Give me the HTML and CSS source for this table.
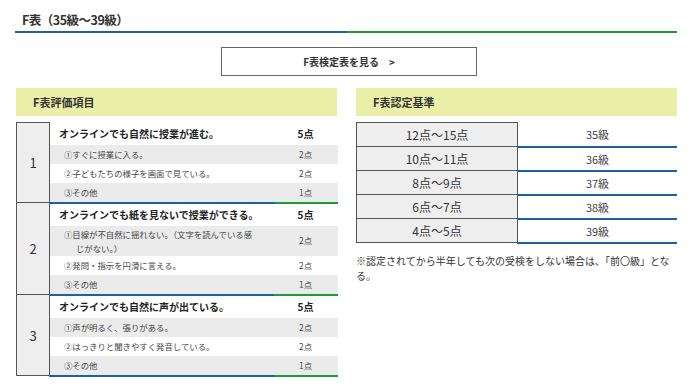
FILE: index.html
```html
<!DOCTYPE html>
<html lang="ja">
<head>
<meta charset="utf-8">
<title>F表</title>
<link rel="stylesheet" href="styles.css">
</head>
<body>
<div class="page">
  <h2 class="page-title">F表（35級〜39級）</h2>
  <div class="rule"><span class="rule-blue"></span><span class="rule-green"></span></div>

  <div class="btn-wrap">
    <a class="btn" href="#">F表検定表を見る　&gt;</a>
  </div>

  <div class="columns">
    <section class="col">
      <h3 class="col-head">F表評価項目</h3>
      <table class="eval">
        <colgroup><col class="c-num"><col class="c-item"><col class="c-pt"></colgroup>
        <tbody>
          <tr>
            <th class="num" rowspan="4">1</th>
            <td class="item head">オンラインでも自然に授業が進む。</td>
            <td class="pt head">5点</td>
          </tr>
          <tr class="gray">
            <td class="item sub">①すぐに授業に入る。</td>
            <td class="pt sub">2点</td>
          </tr>
          <tr>
            <td class="item sub">②子どもたちの様子を画面で見ている。</td>
            <td class="pt sub">2点</td>
          </tr>
          <tr class="gray last">
            <td class="item sub">③その他</td>
            <td class="pt sub">1点</td>
          </tr>
        </tbody>
        <tbody>
          <tr>
            <th class="num" rowspan="4">2</th>
            <td class="item head">オンラインでも紙を見ないで授業ができる。</td>
            <td class="pt head">5点</td>
          </tr>
          <tr class="gray">
            <td class="item sub multi">①目線が不自然に揺れない。（文字を読んでいる感じがない。）</td>
            <td class="pt sub">2点</td>
          </tr>
          <tr>
            <td class="item sub">②発問・指示を円滑に言える。</td>
            <td class="pt sub">2点</td>
          </tr>
          <tr class="gray last">
            <td class="item sub">③その他</td>
            <td class="pt sub">1点</td>
          </tr>
        </tbody>
        <tbody>
          <tr>
            <th class="num" rowspan="4">3</th>
            <td class="item head">オンラインでも自然に声が出ている。</td>
            <td class="pt head">5点</td>
          </tr>
          <tr class="gray">
            <td class="item sub">①声が明るく、張りがある。</td>
            <td class="pt sub">2点</td>
          </tr>
          <tr>
            <td class="item sub">②はっきりと聞きやすく発音している。</td>
            <td class="pt sub">2点</td>
          </tr>
          <tr class="gray last">
            <td class="item sub">③その他</td>
            <td class="pt sub">1点</td>
          </tr>
        </tbody>
      </table>
    </section>

    <section class="col">
      <h3 class="col-head">F表認定基準</h3>
      <table class="grade">
        <tbody>
          <tr><th>12点〜15点</th><td>35級</td></tr>
          <tr><th>10点〜11点</th><td>36級</td></tr>
          <tr><th>8点〜9点</th><td>37級</td></tr>
          <tr><th>6点〜7点</th><td>38級</td></tr>
          <tr><th>4点〜5点</th><td>39級</td></tr>
        </tbody>
      </table>
      <p class="note">※認定されてから半年しても次の受検をしない場合は、「前〇級」となる。</p>
    </section>
  </div>
</div>
</body>
</html>
```

FILE: styles.css
```css
* { box-sizing: border-box; }

body {
  margin: 0;
  background: #fff;
  color: #333;
  font-family: "Noto Sans CJK JP", "Noto Sans", sans-serif;
}

.page {
  width: 662px;
  margin-left: 15px;
}

.page-title {
  margin: 0;
  height: 31px;
  padding: 11px 0 0 7px;
  font-size: 12.5px;
  line-height: 17px;
  font-weight: 700;
  letter-spacing: -0.5px;
  color: #333;
}

.rule {
  display: flex;
  height: 2px;
}
.rule-blue { width: 331px; background: #1f5fa9; }
.rule-green { flex: 1; background: #1c9b37; }

.btn-wrap {
  display: flex;
  justify-content: center;
  padding-left: 6px;
  margin-top: 14px;
}

.btn {
  display: flex;
  align-items: center;
  justify-content: center;
  width: 256px;
  height: 29px;
  border: 1px solid #666;
  color: #333;
  text-decoration: none;
  font-size: 10px;
  font-weight: 700;
}

.columns {
  display: grid;
  grid-template-columns: 321px 321px;
  column-gap: 19px;
  margin-top: 12px;
  padding-left: 1px;
}

.col-head {
  margin: 0;
  height: 28px;
  line-height: 28px;
  padding-left: 17px;
  background: #eaefa7;
  font-size: 11px;
  font-weight: 700;
  color: #333;
}

/* evaluation table */
.eval {
  width: 321px;
  margin-top: 6px;
  border-collapse: collapse;
  table-layout: fixed;
}
.c-num { width: 33px; }
.c-item { width: 224px; }
.c-pt { width: 64px; }

.eval .num {
  border: 1px solid #555;
  background: #eee;
  font-size: 13px;
  font-weight: 400;
  color: #333;
  text-align: center;
  vertical-align: middle;
  padding: 0;
}

.eval td {
  padding: 0;
  vertical-align: middle;
}

.eval .head {
  height: 22px;
  line-height: 22px;
  font-size: 10px;
  font-weight: 700;
  color: #222;
}
.eval .item.head { padding-left: 9px; }

.eval .sub {
  height: 19px;
  line-height: 19px;
  font-size: 8.4px;
  color: #444;
}
.eval .item.sub {
  padding: 0 15px 0 26px;
  text-indent: -12px;
}
.eval .item.multi { height: 30px; line-height: 14px; padding-top: 1px; padding-bottom: 1px; }

.eval .pt { text-align: center; }

.eval .gray td { background: #ebebeb; }

.eval .last .item { border-bottom: 2px solid #1f5fa9; }
.eval .last .pt { border-bottom: 2px solid #1c9b37; }

/* grade table */
.grade {
  width: 321px;
  margin-top: 6px;
  border-collapse: collapse;
  table-layout: fixed;
}
.grade th {
  width: 161px;
  height: 24px;
  padding: 0;
  border: 1px solid #555;
  background: #eee;
  font-size: 12px;
  font-weight: 400;
  color: #333;
  text-align: center;
}
.grade td {
  height: 24px;
  padding: 0;
  border-bottom: 2px solid #1f5fa9;
  font-size: 11px;
  color: #444;
  text-align: center;
}

.note {
  margin: 9px 0 0;
  width: 320px;
  font-size: 10px;
  line-height: 15px;
  color: #333;
}
```
